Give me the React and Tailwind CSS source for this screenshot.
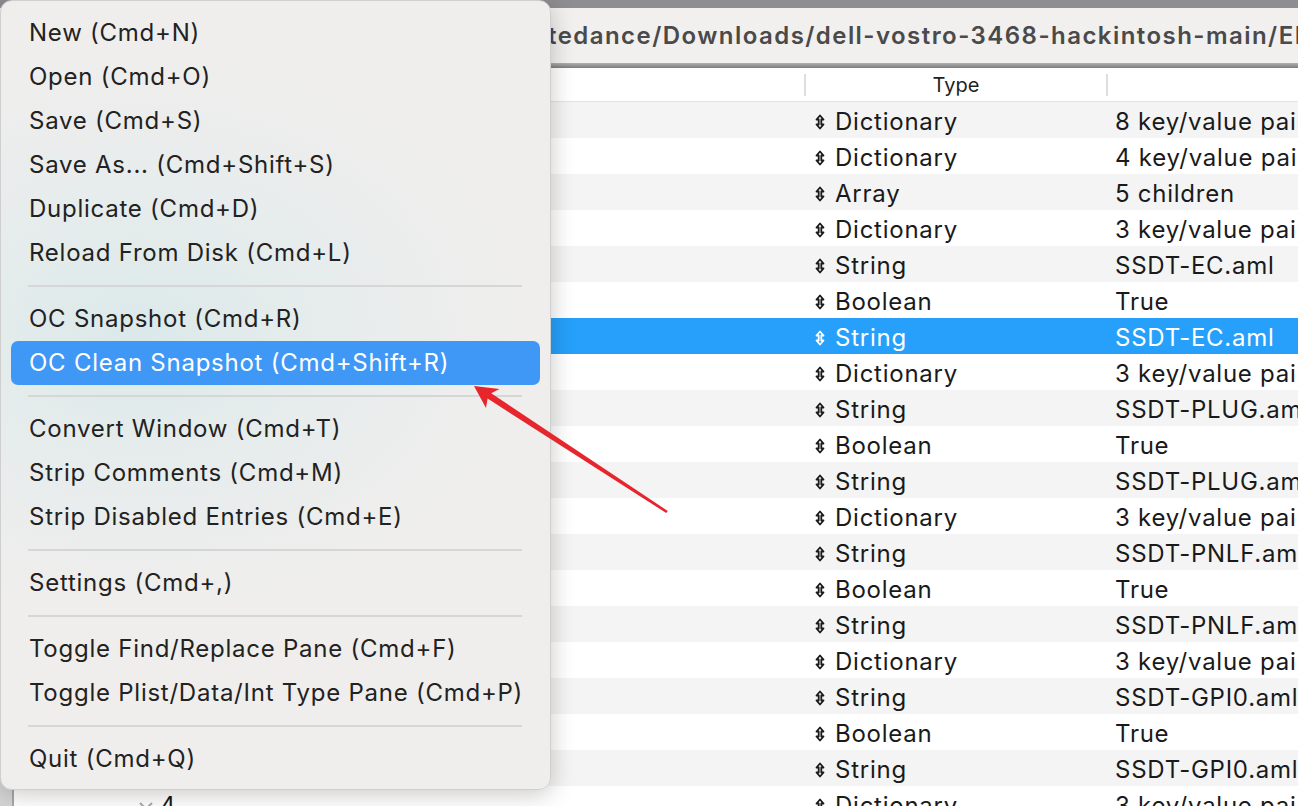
import React from 'react';

const rows = [
  ['Dictionary', '8 key/value pairs'],
  ['Dictionary', '4 key/value pairs'],
  ['Array', '5 children'],
  ['Dictionary', '3 key/value pairs'],
  ['String', 'SSDT-EC.aml'],
  ['Boolean', 'True'],
  ['String', 'SSDT-EC.aml'],
  ['Dictionary', '3 key/value pairs'],
  ['String', 'SSDT-PLUG.aml'],
  ['Boolean', 'True'],
  ['String', 'SSDT-PLUG.aml'],
  ['Dictionary', '3 key/value pairs'],
  ['String', 'SSDT-PNLF.aml'],
  ['Boolean', 'True'],
  ['String', 'SSDT-PNLF.aml'],
  ['Dictionary', '3 key/value pairs'],
  ['String', 'SSDT-GPI0.aml'],
  ['Boolean', 'True'],
  ['String', 'SSDT-GPI0.aml'],
  ['Dictionary', '3 key/value pairs'],
];

const groups = [
  ['New (Cmd+N)', 'Open (Cmd+O)', 'Save (Cmd+S)', 'Save As... (Cmd+Shift+S)', 'Duplicate (Cmd+D)', 'Reload From Disk (Cmd+L)'],
  ['OC Snapshot (Cmd+R)', 'OC Clean Snapshot (Cmd+Shift+R)'],
  ['Convert Window (Cmd+T)', 'Strip Comments (Cmd+M)', 'Strip Disabled Entries (Cmd+E)'],
  ['Settings (Cmd+,)'],
  ['Toggle Find/Replace Pane (Cmd+F)', 'Toggle Plist/Data/Int Type Pane (Cmd+P)'],
  ['Quit (Cmd+Q)'],
];

const font = { fontFamily: 'Inter, "Noto Sans", sans-serif' };

// little up/down popup indicator in the Type column
const UpDown = ({ color }) => (
  <svg width="10" height="16" viewBox="0 0 10 16" fill="none" stroke={color} strokeWidth="1.8" strokeLinejoin="round">
    <path d="M5 1.5 L8.5 5.5 H6.3 V10.5 H8.5 L5 14.5 L1.5 10.5 H3.7 V5.5 H1.5 Z" />
  </svg>
);

const MenuItem = ({ label, active }) => (
  <div
    className={`mx-[10px] h-[44px] flex items-center px-[18px] rounded-[7px] text-[24px] tracking-[0.75px] ${
      active ? 'bg-[#3f97f6] text-white' : 'text-[#222222]'
    }`}
  >
    {label}
  </div>
);

export default function App() {
  return (
    <div className="relative w-[1298px] h-[806px] overflow-hidden bg-[#f4f4f4]" style={font}>
      {/* window behind */}
      <div className="flex flex-col h-full">
        <div className="h-[8px] bg-[#8e8d92]" />
        <div className="h-[55px] bg-[#f1f0ef] flex items-center pl-[548px] pt-[1px] whitespace-nowrap overflow-hidden">
          <span className="text-[24px] font-semibold text-[#4a4a4a] tracking-[1.45px]">
            tedance/Downloads/dell-vostro-3468-hackintosh-main/EFI/OC/config.plist
          </span>
        </div>
        <div className="h-[5px] bg-gradient-to-b from-[#b0b0b0] to-[#7c7c7c]" />
        <div className="flex flex-1 min-h-0">
          <div className="w-[14px] shrink-0 bg-[#d6d5d5] border-r-2 border-[#a7a7a7]" />
          <div className="flex-1 min-w-0 flex flex-col bg-white">
            <div className="h-[34px] flex items-center border-b border-[#e4e4e4] text-[20px] text-[#1f1f1f] shrink-0">
              <div className="w-[790px] shrink-0" />
              <div className="w-[2px] h-[22px] shrink-0 bg-[#dedede]" />
              <div className="w-[300px] shrink-0 text-center">Type</div>
              <div className="w-[2px] h-[22px] shrink-0 bg-[#dedede]" />
            </div>
            {rows.map(([type, value], i) => {
              const sel = i === 6;
              const bg = sel ? 'bg-[#26a0fa] text-white' : i % 2 === 0 ? 'bg-[#f4f4f4] text-[#1a1a1a]' : 'bg-white text-[#1a1a1a]';
              return (
                <div key={i} className={`h-[36px] shrink-0 flex items-center pt-[3px] text-[24px] tracking-[0.75px] whitespace-nowrap ${bg}`}>
                  <div className="w-[791px] shrink-0 flex items-center">
                    {i === 19 && (
                      <div className="flex items-center gap-[6px] pl-[124px]">
                        <svg width="16" height="10" viewBox="0 0 16 10" fill="none" stroke="#a9a9a9" strokeWidth="2">
                          <path d="M2 2 L8 8 L14 2" />
                        </svg>
                        <span>4</span>
                      </div>
                    )}
                  </div>
                  <div className="w-[302px] shrink-0 flex items-center gap-[10px] pl-[10px]">
                    <UpDown color={sel ? '#ffffff' : '#1a1a1a'} />
                    <span>{type}</span>
                  </div>
                  <div className="pl-[8px] shrink-0">{value}</div>
                </div>
              );
            })}
          </div>
        </div>
      </div>

      {/* popup menu */}
      <div className="absolute left-0 top-0 w-[551px] h-[790px] rounded-[12px] border border-[#cfcfcf] shadow-[0_4px_24px_rgba(0,0,0,0.22)] bg-[radial-gradient(ellipse_70%_35%_at_25%_42%,#dbe9ea_0%,#e6ecec_45%,#efeeed_100%)] pt-[10px] flex flex-col whitespace-nowrap">
        {groups.map((g, gi) => (
          <React.Fragment key={gi}>
            {gi > 0 && (
              <div className="h-[22px] flex items-center pl-[27px] pr-[28px]">
                <div className="h-[2px] w-full bg-[#d6d6d6]" />
              </div>
            )}
            {g.map((label) => (
              <MenuItem key={label} label={label} active={label.startsWith('OC Clean')} />
            ))}
          </React.Fragment>
        ))}
      </div>

      {/* red annotation arrow */}
      <svg className="absolute left-0 top-0 pointer-events-none" width="1298" height="806">
        <polygon
          points="474,386 499.5,389 491.2,393.3 667.8,511 666.2,513 487.6,398.6 486,408"
          fill="#e6262c"
        />
      </svg>
    </div>
  );
}
